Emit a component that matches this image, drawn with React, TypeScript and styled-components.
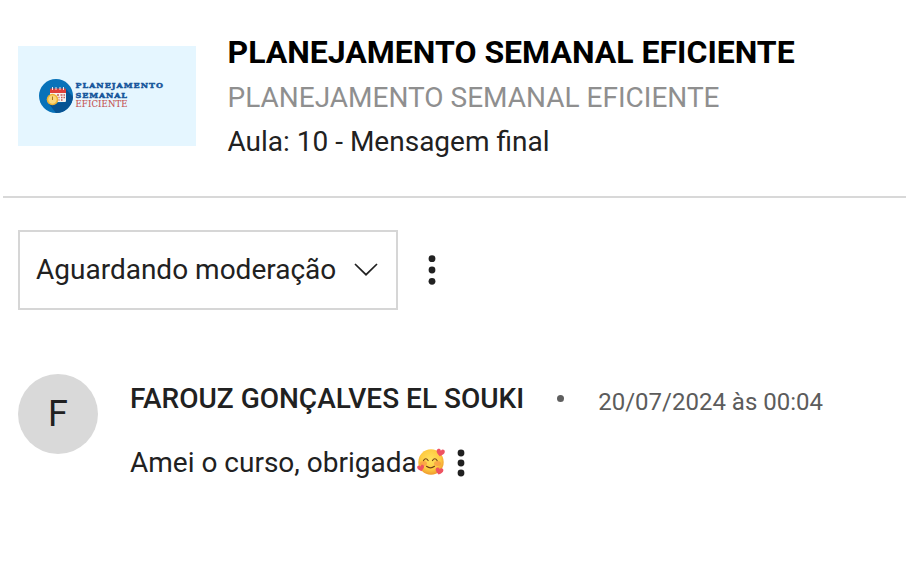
import React from 'react';
import styled, { createGlobalStyle } from 'styled-components';

const GlobalStyle = createGlobalStyle`
  * {
    box-sizing: border-box;
  }

  body {
    background: #fff;
    color: #212121;
    font-family: Roboto, 'Liberation Sans', sans-serif;
    font-size: 28px;
    margin: 0;
    overflow: hidden;
  }

  svg {
    display: block;
    flex: none;
  }
`;

const Page = styled.main`
  height: 566px;
  width: 906px;
`;

const Header = styled.header`
  display: flex;
  gap: 31.5px;
  height: 196px;
  padding: 30px 0 0 18px;
`;

const Thumbnail = styled.div`
  align-items: center;
  background: #e5f6ff;
  display: flex;
  gap: 2.5px;
  height: 100px;
  margin-top: 16px;
  padding-left: 21px;
  width: 178px;
`;

const Brand = styled.div`
  display: flex;
  flex-direction: column;
  padding-bottom: 1.5px;
`;

const BrandLine = styled.span<{ $color: string; $spacing: number; $bold?: boolean }>`
  color: ${({ $color }) => $color};
  font-family: 'DejaVu Serif', serif;
  font-size: ${({ $bold }) => ($bold ? 8 : 8.5)}px;
  font-weight: ${({ $bold }) => ($bold ? 700 : 400)};
  letter-spacing: ${({ $spacing }) => $spacing}px;
  line-height: 9.5px;
  white-space: nowrap;
  -webkit-text-stroke: ${({ $bold }) => ($bold ? 0.5 : 0.1)}px currentColor;
`;

const Course = styled.div`
  white-space: nowrap;
`;

const Title = styled.h1`
  color: #000;
  font-size: 32px;
  font-weight: 700;
  line-height: 44px;
  margin: 0;
`;

const Subtitle = styled.div`
  color: #8f8f8f;
  line-height: 47px;
`;

const Lesson = styled.div`
  line-height: 42px;
`;

const Divider = styled.hr`
  background: #d8d8d8;
  border: 0;
  height: 2px;
  margin: 0 0 0 3px;
`;

const Toolbar = styled.div`
  align-items: center;
  display: flex;
  gap: 30px;
  padding: 32px 18px 0;
`;

const Select = styled.button`
  align-items: center;
  background: #fff;
  border: 2px solid #d6d6d6;
  color: inherit;
  display: flex;
  font: inherit;
  height: 80px;
  justify-content: space-between;
  padding: 0 18px 2px 16px;
  white-space: nowrap;
  width: 380px;
`;

const MenuButton = styled.button`
  background: none;
  border: 0;
  color: #212121;
  padding: 0;
`;

const Comment = styled.article`
  display: flex;
  gap: 32px;
  padding: 64px 18px 0;
`;

const Avatar = styled.div`
  background: #d9d9d9;
  border-radius: 50%;
  flex: none;
  font-size: 36px;
  height: 80px;
  line-height: 80px;
  text-align: center;
  width: 80px;
`;

const Meta = styled.div`
  display: flex;
  line-height: 50px;
  white-space: nowrap;
`;

const Author = styled.span`
  font-weight: 500;
`;

const Bullet = styled.i`
  background: #5f5f5f;
  border-radius: 50%;
  height: 7px;
  margin: 21px 34px 0 33px;
  width: 7px;
`;

const PostedAt = styled.time`
  color: #5c5c5c;
  font-size: 24px;
  line-height: 56px;
`;

const Message = styled.div`
  align-items: center;
  display: flex;
  height: 50px;
  margin-top: 7px;
  white-space: nowrap;

  ${MenuButton} {
    margin: 2px 0 0 12px;
  }
`;

interface DotsProps {
  height: number;
  spread: number;
}

function Dots ({ height, spread }: DotsProps): React.ReactElement<DotsProps> {
  return (
    <svg fill='currentColor' height={height} width='8'>
      {[-spread, 0, spread].map((offset) => (
        <circle cx='4' cy={height / 2 + offset} key={offset} r='3.4' />
      ))}
    </svg>
  );
}

function Chevron (): React.ReactElement {
  return (
    <svg fill='none' height='14' stroke='#212121' strokeWidth='1.7' viewBox='0 0 24 14' width='24'>
      <path d='M1 2l11 10.700L23 2' />
    </svg>
  );
}

function CalendarLogo (): React.ReactElement {
  return (
    <svg height='34' viewBox='0 0 34 34' width='34'>
      <circle cx='17' cy='17' fill='#0872b9' r='17' />
      <path d='M10 25l7 9A17 17 0 0 0 34 18L27 10 25 23z' fill='#075393' />
      <path d='M11 13h16v9q0 1-1 1H12q-1 0-1-1z' fill='#f6f3ef' />
      <path d='M12 9.500h14q1 0 1 1V14H11v-3.500q0-1 1-1z' fill='#e0403a' />
      <path d='M13.500 8v3M17 8v3M21 8v3M24.500 8v3' stroke='#f7e5e0' />
      <path d='M18 16h2m1.500 0h2m1 0h1.500M19.500 18.500h1m1.500 0h1.500m1 0h1.500M19.500 21h1m1.500 0h1.500' stroke='#c65b59' strokeWidth='1.300' />
      <circle cx='13.500' cy='20.500' fill='#efb233' r='5.800' />
      <circle cx='13.500' cy='20.500' fill='#fbd77b' r='4.200' />
      <path d='M13.500 17.500v3.500' stroke='#a87622' />
    </svg>
  );
}

const HEART = 'M0 4C-3 2-4.500.5-4.300-1.500-4-4-1-4.300 0-2 1-4.300 4-4 4.300-1.500 4.500.5 3 2 0 4z';

function LovedFace (): React.ReactElement {
  return (
    <svg aria-label='🥰' height='28' role='img' viewBox='0 0 28 28' width='28'>
      <defs>
        <radialGradient cx='.48' cy='.4' id='face' r='.6'>
          <stop offset='0' stopColor='#ffe15c' />
          <stop offset='.65' stopColor='#fecb42' />
          <stop offset='1' stopColor='#ef9a2c' />
        </radialGradient>
      </defs>
      <circle cx='14' cy='14' fill='url(#face)' r='12.700' />
      <ellipse cx='6.500' cy='15.500' fill='#f77e43' opacity='.5' rx='3.500' ry='2.500' />
      <ellipse cx='20.500' cy='15.500' fill='#f77e43' opacity='.5' rx='3.500' ry='2.500' />
      <g fill='none' stroke='#744018' strokeLinecap='round' strokeWidth='1.200'>
        <path d='M6.500 12.500q2.300-3.500 4.600 0M15.500 12.500q2.300-3.500 4.600 0' />
        <path d='M9.500 18.300q4 3.200 8 0' />
      </g>
      <g fill='#ee5261'>
        <path d={HEART} transform='translate(23.500 4.500) rotate(12) scale(.95)' />
        <path d={HEART} transform='translate(3.800 20) rotate(-12) scale(.8)' />
        <path d={HEART} transform='translate(22.300 23) rotate(12) scale(.9)' />
      </g>
    </svg>
  );
}

function App (): React.ReactElement {
  return (
    <Page>
      <GlobalStyle />
      <Header>
        <Thumbnail>
          <CalendarLogo />
          <Brand>
            <BrandLine $bold $color='#17569b' $spacing={1}>PLANEJAMENTO</BrandLine>
            <BrandLine $bold $color='#17569b' $spacing={0.9}>SEMANAL</BrandLine>
            <BrandLine $color='#c4504f' $spacing={0.15}>EFICIENTE</BrandLine>
          </Brand>
        </Thumbnail>
        <Course>
          <Title>PLANEJAMENTO SEMANAL EFICIENTE</Title>
          <Subtitle>PLANEJAMENTO SEMANAL EFICIENTE</Subtitle>
          <Lesson>Aula: 10 - Mensagem final</Lesson>
        </Course>
      </Header>
      <Divider />
      <Toolbar>
        <Select>
          Aguardando moderação
          <Chevron />
        </Select>
        <MenuButton aria-label='Mais opções'>
          <Dots height={32} spread={11.3} />
        </MenuButton>
      </Toolbar>
      <Comment>
        <Avatar>F</Avatar>
        <div>
          <Meta>
            <Author>FAROUZ GONÇALVES EL SOUKI</Author>
            <Bullet />
            <PostedAt>20/07/2024 às 00:04</PostedAt>
          </Meta>
          <Message>
            Amei o curso, obrigada
            <LovedFace />
            <MenuButton aria-label='Mais opções'>
              <Dots height={28} spread={10} />
            </MenuButton>
          </Message>
        </div>
      </Comment>
    </Page>
  );
}

export default App;
